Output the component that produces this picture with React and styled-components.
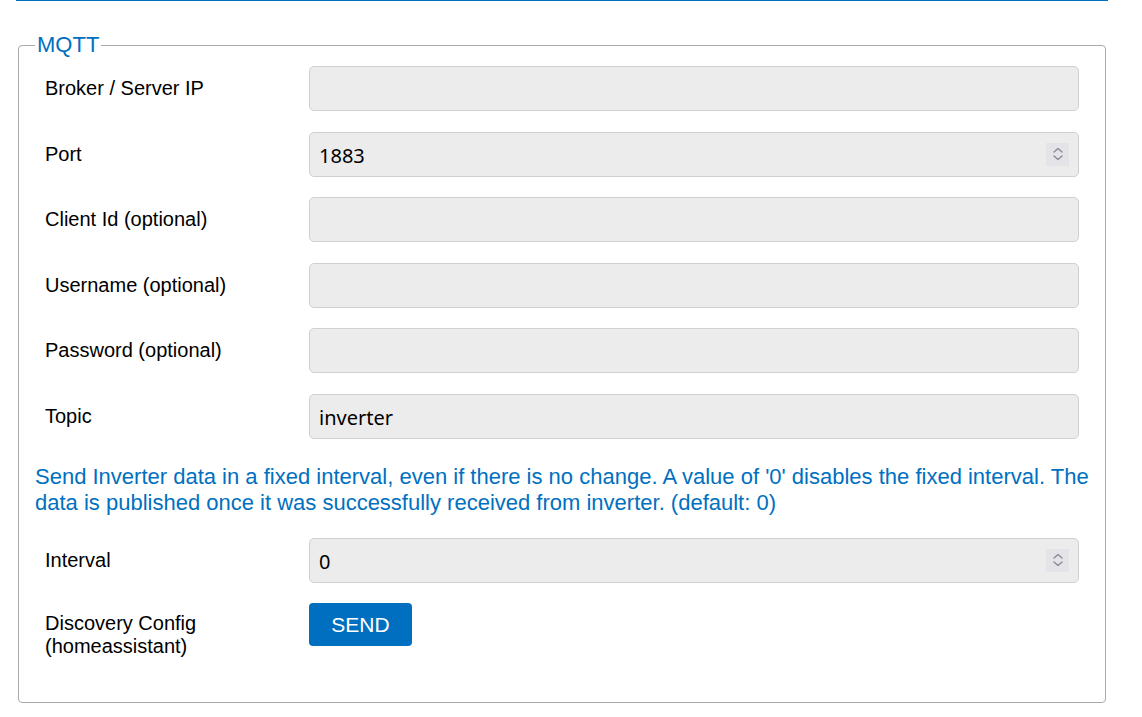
import styled, { createGlobalStyle } from 'styled-components';

const Global = createGlobalStyle`
    body {
        margin: 0;
        background: #fff;
        font-family: "Liberation Sans", Arial, sans-serif;
        color: #000;
    }
`
const Page = styled.div`
    width: 1092px;
    margin-left: 16px;
    border-top: 1px solid #0070c0;
    padding-top: 31px;
`
const Fieldset = styled.fieldset`
    margin: 0 2px;
    padding: 8px 16px 23px;
    border: 1px solid #aaa;
    border-radius: 4px;
`
const Legend = styled.legend`
    margin-left: 0;
    padding: 0 2px;
    color: #0070c0;
    font-size: 22px;
`
const Row = styled.div`
    display: grid;
    grid-template-columns: 264px 1fr;
    align-items: ${p => p.$top ? 'start' : 'center'};
    padding: 0 10px;
    margin-bottom: 20.5px;
`
const Label = styled.label`
    font-size: 20px;
    line-height: 23px;
    padding-top: ${p => p.$offset || 0}px;
`
const Field = styled.div`
    position: relative;
    height: 45px;
`
const Input = styled.input`
    box-sizing: border-box;
    width: 100%;
    height: 100%;
    padding: 2px 9px 0;
    border: 1px solid #d0d0d0;
    border-radius: 5px;
    background: #ececec;
    font-family: "Noto Sans", "Open Sans", sans-serif;
    font-size: 20px;
    color: #000;
    outline: none;
`
const Spinner = styled.span`
    position: absolute;
    right: 10px;
    top: 11px;
    width: 23px;
    height: 23px;
    background: #e3e3e8;
    display: flex;
    align-items: center;
    justify-content: center;
`
const Help = styled.p`
    margin: 25px 0 22px;
    color: #0070c0;
    font-size: 22px;
    line-height: 26px;
`
const Button = styled.button`
    width: 103px;
    height: 43px;
    border: none;
    border-radius: 4px;
    background: #006fc0;
    color: #fff;
    font-family: "Liberation Sans", Arial, sans-serif;
    font-size: 21px;
    cursor: pointer;
`

function Chevrons() {
    return (
        <svg width="12" height="16" viewBox="0 0 12 16" fill="none" stroke="#8a8a96" strokeWidth="1.4" strokeLinecap="round" strokeLinejoin="round">
            <path d="M2 6 L6 2.5 L10 6" />
            <path d="M2 10 L6 13.5 L10 10" />
        </svg>
    )
}

function FormRow({ label, value = '', number }) {
    return (
        <Row>
            <Label>{label}</Label>
            <Field>
                <Input defaultValue={value} />
                {number && <Spinner><Chevrons /></Spinner>}
            </Field>
        </Row>
    )
}

export default function App() {
    return (
        <>
            <Global />
            <Page>
                <Fieldset>
                    <Legend>MQTT</Legend>
                    <FormRow label="Broker / Server IP" />
                    <FormRow label="Port" value="1883" number />
                    <FormRow label="Client Id (optional)" />
                    <FormRow label="Username (optional)" />
                    <FormRow label="Password (optional)" />
                    <FormRow label="Topic" value="inverter" />
                    <Help>
                        Send Inverter data in a fixed interval, even if there is no change. A value of '0' disables the fixed interval. The data is published once it was successfully received from inverter. (default: 0)
                    </Help>
                    <FormRow label="Interval" value="0" number />
                    <Row $top>
                        <Label $offset={9}>Discovery Config<br />(homeassistant)</Label>
                        <div><Button>SEND</Button></div>
                    </Row>
                </Fieldset>
            </Page>
        </>
    )
}
